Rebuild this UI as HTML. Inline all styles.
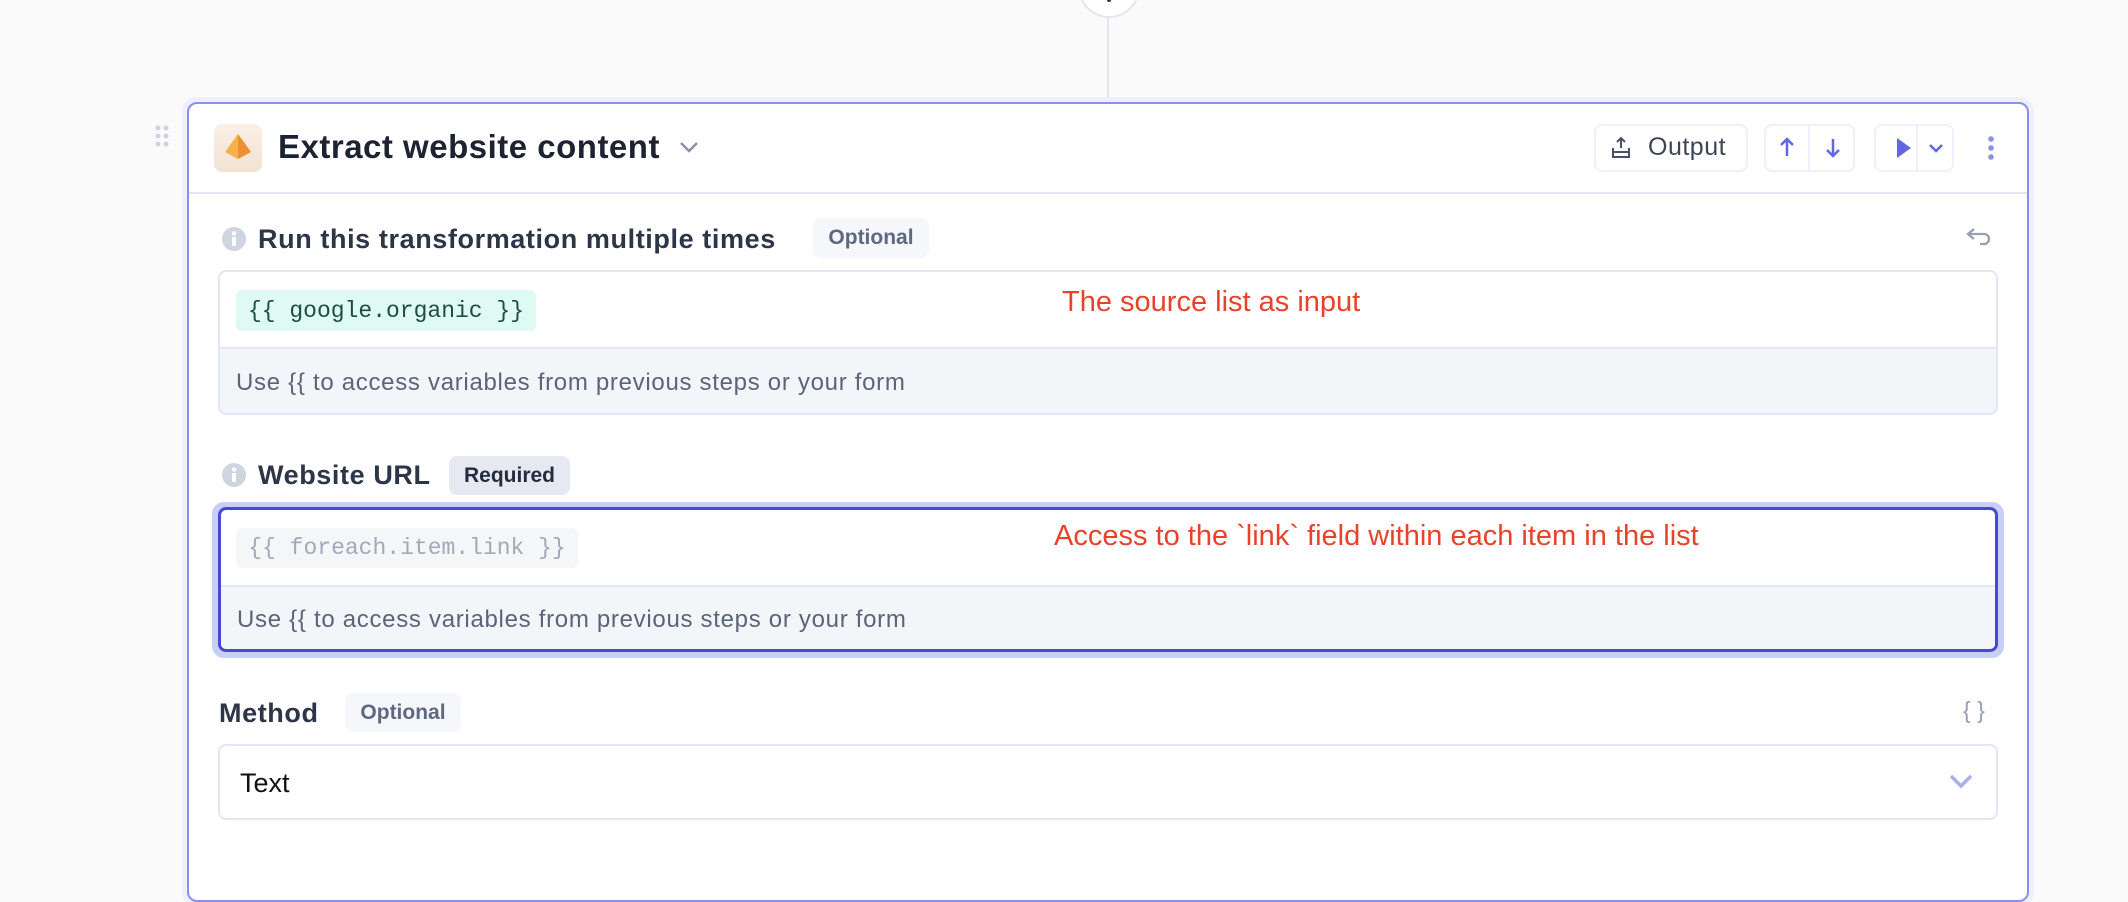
<!DOCTYPE html>
<html><head><meta charset="utf-8"><style>
*{box-sizing:border-box;margin:0;padding:0}
body{width:2128px;height:848px;background:#fafafa;position:relative;overflow:hidden;font-family:"Liberation Sans",sans-serif}
.a{position:absolute}
.card{left:187px;top:102px;width:1842px;height:800px;background:#fff;border:2px solid #8a8ff0;border-radius:10px;box-shadow:0 0 0 5px #eef0fb}
.lbl{font-size:27px;font-weight:bold;color:#2d3648;letter-spacing:0.6px}
.pill{border-radius:8px;font-size:21px;font-weight:bold;display:flex;align-items:center;justify-content:center}
.box{left:218px;width:1780px;border:2px solid #e2e6f8;border-radius:8px;background:#fff;overflow:hidden}
.help{position:absolute;left:0;right:0;background:#f3f6f9;border-top:2px solid #e2e6f8;font-size:24px;letter-spacing:0.7px;color:#5b6478;padding-left:16px;display:flex;align-items:center}
.chip{font-family:"Liberation Mono",monospace;font-size:23px;border-radius:6px;display:flex;align-items:center;justify-content:center}
.red{font-family:"Liberation Sans",sans-serif;font-size:29px;color:#e8432a}
.btn{border:2px solid #eef1fc;border-radius:8px;background:#fff}
</style></head><body>
<div class="a" style="left:1078px;top:-44px;width:62px;height:62px;border-radius:50%;border:2px solid #e2e6f0;background:#fff"></div>
<div class="a" style="left:1107px;top:-2px;width:4px;height:4px;background:#333;border-radius:50%"></div>
<div class="a" style="left:1107px;top:18px;width:2px;height:84px;background:#e2e6f0"></div>
<svg class="a" style="left:154px;top:124px" width="16" height="24"><g fill="#cdd3de"><circle cx="4" cy="4" r="2.5"/><circle cx="12" cy="4" r="2.5"/><circle cx="4" cy="12" r="2.5"/><circle cx="12" cy="12" r="2.5"/><circle cx="4" cy="20" r="2.5"/><circle cx="12" cy="20" r="2.5"/></g></svg>
<div class="a card"></div>
<div class="a" style="left:214px;top:124px;width:48px;height:48px;border-radius:8px;background:linear-gradient(#faf0e6,#f2e3d3)"></div>
<svg class="a" style="left:214px;top:124px" width="48" height="48"><polygon points="24,10 11,28 24,35" fill="#f4b24a"/><polygon points="24,10 37,28 24,35" fill="#ee8f32"/></svg>
<div class="a" style="left:278px;top:128px;font-size:33px;font-weight:bold;color:#1e2333;letter-spacing:0.5px">Extract website content</div>
<svg class="a" style="left:678px;top:140px" width="22" height="14"><path d="M3 3l8 8 8-8" stroke="#8a93a6" stroke-width="2.5" fill="none"/></svg>
<div class="a btn" style="left:1594px;top:124px;width:154px;height:48px"></div>
<svg class="a" style="left:1610px;top:136px" width="22" height="24"><path d="M11 2v10M7 6l4-4 4 4M3 12v9h16v-9M3 16h16" stroke="#4a5366" stroke-width="2" fill="none"/></svg>
<div class="a" style="left:1648px;top:133px;font-size:25px;color:#3c4558;letter-spacing:0.5px">Output</div>
<div class="a btn" style="left:1764px;top:124px;width:91px;height:48px"></div>
<div class="a" style="left:1808px;top:126px;width:2px;height:44px;background:#eef1fc"></div>
<svg class="a" style="left:1772px;top:134px" width="80" height="28"><path d="M15 22V5M9 11l6-6 6 6M61 5v17M55 16l6 6 6-6" stroke="#6266e0" stroke-width="2.5" fill="none"/></svg>
<div class="a btn" style="left:1874px;top:124px;width:80px;height:48px"></div>
<div class="a" style="left:1916px;top:126px;width:2px;height:44px;background:#eef1fc"></div>
<svg class="a" style="left:1880px;top:134px" width="70" height="28"><polygon points="17,4 31,14 17,24" fill="#6266e0"/><path d="M50 11l6 6 6-6" stroke="#6266e0" stroke-width="2.5" fill="none"/></svg>
<svg class="a" style="left:1984px;top:134px" width="14" height="30"><g fill="#8a8ff0"><circle cx="7" cy="5" r="2.8"/><circle cx="7" cy="14" r="2.8"/><circle cx="7" cy="23" r="2.8"/></g></svg>
<div class="a" style="left:189px;top:192px;width:1838px;height:2px;background:#e3e6f2"></div>
<svg class="a" style="left:221px;top:226px" width="26" height="26"><circle cx="13" cy="13" r="12" fill="#cfd5e0"/><rect x="11" y="11" width="4" height="9" fill="#fff"/><circle cx="13" cy="7.5" r="2.2" fill="#fff"/></svg>
<div class="a lbl" style="left:258px;top:224px">Run this transformation multiple times</div>
<div class="a pill" style="left:813px;top:218px;width:116px;height:40px;background:#f5f7fa;color:#5e6880">Optional</div>
<svg class="a" style="left:1964px;top:226px" width="28" height="24"><path d="M10 3L4 8l6 5M4 8h16a5 5 0 0 1 0 10h-4" stroke="#97a0b2" stroke-width="2.3" fill="none"/></svg>
<div class="a box" style="top:270px;height:145px">
  <div class="help" style="top:75px;height:70px">Use {{ to access variables from previous steps or your form</div>
</div>
<div class="a chip" style="left:236px;top:290px;width:300px;height:41px;background:#defaf3;color:#1f4d44">{{ google.organic }}</div>
<div class="a red" style="left:1062px;top:286px">The source list as input</div>
<svg class="a" style="left:221px;top:462px" width="26" height="26"><circle cx="13" cy="13" r="12" fill="#cfd5e0"/><rect x="11" y="11" width="4" height="9" fill="#fff"/><circle cx="13" cy="7.5" r="2.2" fill="#fff"/></svg>
<div class="a lbl" style="left:258px;top:460px">Website URL</div>
<div class="a pill" style="left:449px;top:456px;width:121px;height:39px;background:#e6e9f2;color:#252c3d">Required</div>
<div class="a" style="left:212px;top:502px;width:1792px;height:156px;border-radius:12px;background:#c8cff6"></div>
<div class="a box" style="top:507px;height:145px;border:3px solid #4a46d6">
  <div class="help" style="top:75px;height:67px">Use {{ to access variables from previous steps or your form</div>
</div>
<div class="a chip" style="left:236px;top:528px;width:342px;height:40px;background:#f5f6f8;color:#a2a9b8">{{ foreach.item.link }}</div>
<div class="a red" style="left:1054px;top:520px">Access to the `link` field within each item in the list</div>
<div class="a lbl" style="left:219px;top:698px">Method</div>
<div class="a pill" style="left:345px;top:693px;width:116px;height:39px;background:#f5f7fa;color:#5e6880">Optional</div>
<div class="a" style="left:1963px;top:697px;font-size:23px;color:#97a0b2">{ }</div>
<div class="a box" style="top:744px;height:76px"></div>
<div class="a" style="left:240px;top:768px;font-size:27px;color:#111">Text</div>
<svg class="a" style="left:1948px;top:772px" width="26" height="18"><path d="M3 4l10 10 10-10" stroke="#a9b0ee" stroke-width="3.5" fill="none"/></svg>
</body></html>
